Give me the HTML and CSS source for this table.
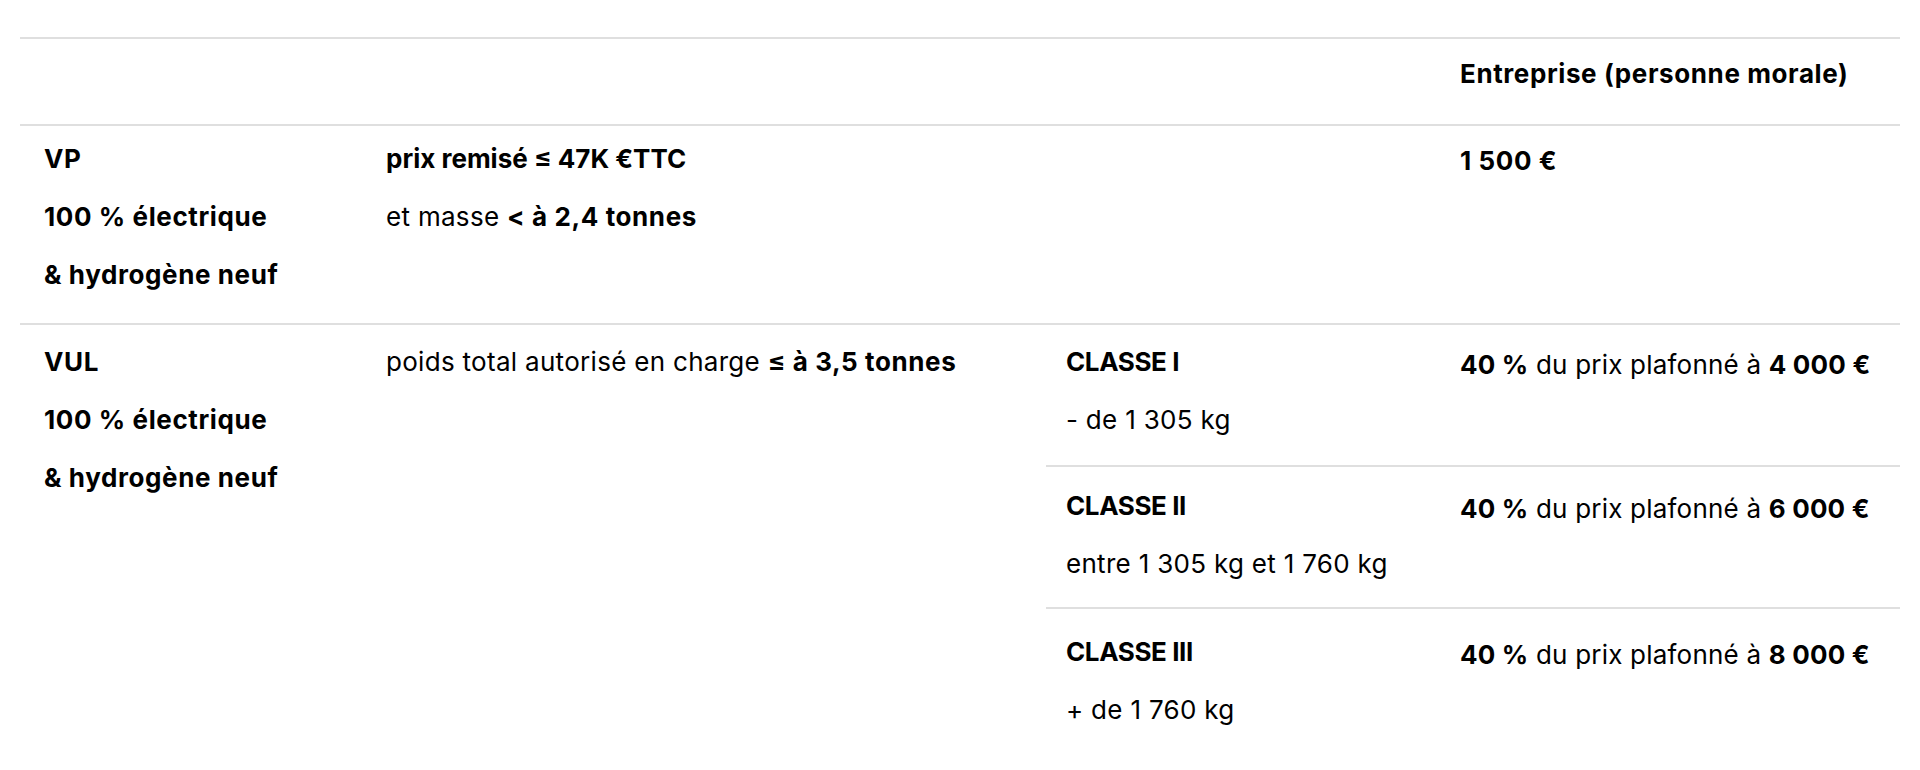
FILE: index.html
```html
<!DOCTYPE html>
<html lang="fr">
<head>
<meta charset="utf-8">
<title>Bonus écologique</title>
<link rel="stylesheet" href="styles.css">
</head>
<body>
<div class="wrap">
  <table class="grid">
    <colgroup>
      <col class="w1"><col class="w2"><col class="w3"><col class="w4">
    </colgroup>
    <tbody>
      <tr class="head">
        <td class="c1"></td>
        <td class="c2"></td>
        <td class="c3"></td>
        <td class="c4"><p><strong>Entreprise (personne morale)</strong></p></td>
      </tr>
      <tr class="vp">
        <td class="c1">
          <p><strong>VP</strong></p>
          <p><strong>100 % électrique</strong></p>
          <p><strong>&amp; hydrogène neuf</strong></p>
        </td>
        <td class="c2">
          <p><strong class="tight">prix remisé ≤ 47K €TTC</strong></p>
          <p>et masse <strong>&lt; à 2,4 tonnes</strong></p>
        </td>
        <td class="c3"></td>
        <td class="c4"><p><strong>1 500 €</strong></p></td>
      </tr>
      <tr class="sub1">
        <td class="c1" rowspan="3">
          <p><strong>VUL</strong></p>
          <p><strong>100 % électrique</strong></p>
          <p><strong>&amp; hydrogène neuf</strong></p>
        </td>
        <td class="c2" rowspan="3">
          <p>poids total autorisé en charge <strong>≤ à 3,5 tonnes</strong></p>
        </td>
        <td class="c3">
          <p><strong class="caps">CLASSE I</strong></p>
          <p>- de 1 305 kg</p>
        </td>
        <td class="c4"><p class="amount"><strong>40 %</strong> du prix plafonné à <strong>4 000 €</strong></p></td>
      </tr>
      <tr class="sub2">
        <td class="c3">
          <p><strong class="caps">CLASSE II</strong></p>
          <p>entre 1 305 kg et 1 760 kg</p>
        </td>
        <td class="c4"><p class="amount"><strong>40 %</strong> du prix plafonné à <strong>6 000 €</strong></p></td>
      </tr>
      <tr class="sub3">
        <td class="c3">
          <p><strong class="caps">CLASSE III</strong></p>
          <p>+ de 1 760 kg</p>
        </td>
        <td class="c4"><p class="amount"><strong>40 %</strong> du prix plafonné à <strong>8 000 €</strong></p></td>
      </tr>
    </tbody>
  </table>
</div>
</body>
</html>
```
FILE: styles.css
```css
html, body {
  margin: 0;
  padding: 0;
  background: #ffffff;
}

body {
  font-family: "Inter", "Liberation Sans", sans-serif;
  font-size: 26px;
  color: #000000;
}

.wrap {
  padding: 37px 20px 0 20px;
}

.grid {
  width: 1880px;
  table-layout: fixed;
  border-collapse: separate;
  border-spacing: 0;
}

.w1 { width: 346px; }
.w2 { width: 680px; }
.w3 { width: 394px; }
.w4 { width: 460px; }

.grid td {
  vertical-align: top;
  border-top: 2px solid #dfdfdf;
  padding: 14px 20px 9px 20px;
}

.grid td.c1 {
  padding-left: 24px;
}

.grid p {
  margin: 0 0 20px 0;
  line-height: 38px;
  white-space: nowrap;
  letter-spacing: 0.3px;
}

.grid strong {
  font-weight: 700;
  letter-spacing: 0.6px;
}

.grid strong.caps {
  letter-spacing: -0.4px;
}

.grid strong.tight {
  letter-spacing: 0px;
}

.grid p.amount {
  letter-spacing: 0.2px;
}

.grid p.amount strong {
  letter-spacing: 0.2px;
}

.head td {
  padding-top: 16px;
  padding-bottom: 11px;
}

.vp td {
  padding-top: 14px;
  padding-bottom: 9px;
}

.sub1 td {
  padding-top: 18px;
  padding-bottom: 6px;
}

.sub2 td {
  padding-top: 20px;
  padding-bottom: 4px;
}

.sub3 td {
  padding-top: 24px;
  padding-bottom: 10px;
}

.head td.c4 { padding-top: 16px; }
.vp td.c4 { padding-top: 16px; }
.sub1 td.c4 { padding-top: 21px; }
.sub2 td.c4 { padding-top: 23px; }
.sub3 td.c4 { padding-top: 27px; }
```
